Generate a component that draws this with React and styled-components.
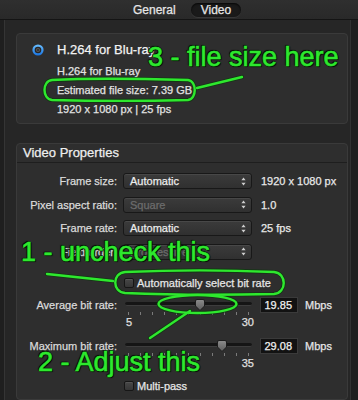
import React from 'react';
import styled, { createGlobalStyle } from 'styled-components';

const GlobalStyle = createGlobalStyle`
  html, body { margin: 0; padding: 0; background: #1f1f1f; }
  body { font-family: "Liberation Sans", Arial, Helvetica, sans-serif; }
  * { box-sizing: border-box; }
`;

const Screen = styled.div`
  position: relative;
  width: 358px;
  height: 400px;
  overflow: hidden;
  background: #1f1f1f;
  display: flex;
  flex-direction: column;
  -webkit-text-stroke: 0.25px currentColor;
`;

const TopBar = styled.div`
  flex: none;
  height: 20px;
  background: linear-gradient(#2f2f2f, #292929);
  border-bottom: 1px solid #141414;
  display: flex;
  align-items: center;
  padding-left: 123px;
  gap: 5px;
`;

const Tab = styled.div`
  height: 14px;
  padding: 0 10px;
  border-radius: 7px;
  font-size: 12px;
  line-height: 14px;
  color: #e6e6e6;
  background: ${p => (p.$active ? '#1a1a1a' : 'transparent')};
  box-shadow: ${p =>
    p.$active ? 'inset 0 1px 2px rgba(0,0,0,0.8), 0 1px 0 rgba(255,255,255,0.07)' : 'none'};
`;

const Body = styled.div`
  flex: 1;
  display: flex;
`;

const Gutter = styled.div`
  width: 4px;
  flex: none;
  background: #1f1f1f;
`;

const Panel = styled.div`
  width: 347px;
  flex: none;
  background: #262626;
  border-left: 1px solid #353535;
  border-right: 1px solid #323232;
  padding: 13px 2px 0 11px;
  display: flex;
  flex-direction: column;
  gap: 19px;
`;

const Card = styled.section`
  background: #2e2e2e;
  border: 1px solid #3a3a3a;
  border-radius: 4px;
`;

const Summary = styled(Card)`
  height: 91px;
  display: grid;
  grid-template-columns: 12px 1fr;
  column-gap: 13px;
  padding: 8px 0 4px 15px;
`;

const RadioIcon = styled.svg`
  width: 12px;
  height: 12px;
  margin-top: 2px;
`;

const SummaryText = styled.div`
  display: flex;
  flex-direction: column;
`;

const Title = styled.div`
  font-size: 13px;
  line-height: 16px;
  color: #f2f2f2;
  margin-bottom: 4px;
`;

const InfoLine = styled.div`
  font-size: 11px;
  line-height: 19px;
  color: #e2e2e2;
`;

const Properties = styled(Card)`
  flex: 1;
  padding-bottom: 2px;
`;

const CardHeader = styled.div`
  height: 19px;
  line-height: 18px;
  font-size: 13px;
  color: #efefef;
  padding-left: 6px;
  border-bottom: 1px solid #1e1e1e;
`;

const Form = styled.div`
  padding-top: 10px;
  display: flex;
  flex-direction: column;
`;

const FieldRow = styled.div`
  display: grid;
  grid-template-columns: 100px 129px 1fr;
  column-gap: 6px;
  align-items: center;
  margin-top: ${p => p.$mt || 0}px;
`;

const Label = styled.div`
  text-align: right;
  font-size: 11px;
  line-height: 16px;
  color: #dadada;
  white-space: nowrap;
  align-self: ${p => (p.$top ? 'start' : 'center')};
`;

const Popup = styled.div`
  height: 16px;
  border: 1px solid #181818;
  border-radius: 3px;
  background: linear-gradient(#3b3b3b, #303030);
  box-shadow: inset 0 1px 0 rgba(255, 255, 255, 0.07);
  display: flex;
  align-items: center;
  justify-content: space-between;
  padding: 0 5px 0 6px;
  font-size: 11px;
  color: ${p => (p.$disabled ? '#6c6c6c' : '#ececec')};
`;

const Arrows = styled.svg`
  width: 5px;
  height: 9px;
`;

const Value = styled.div`
  font-size: 11px;
  color: #e8e8e8;
  margin-left: 3px;
  white-space: nowrap;
`;

const CheckRow = styled.label`
  display: flex;
  align-items: center;
  gap: 3px;
  padding-left: 107px;
  height: 16px;
  margin-top: ${p => p.$mt || 0}px;
  font-size: 11px;
  color: #e6e6e6;
`;

const Box = styled.span`
  width: 10px;
  height: 10px;
  border: 1px solid #161616;
  border-radius: 2px;
  background: linear-gradient(#474747, #363636);
  box-shadow: inset 0 1px 0 rgba(255, 255, 255, 0.08);
`;

const SliderBox = styled.div`
  display: flex;
  flex-direction: column;
`;

const TrackArea = styled.div`
  position: relative;
  height: 16px;
`;

const Track = styled.div`
  margin: 5px 0 0 2px;
  height: 4px;
  border-radius: 2px;
  background: #151515;
  border-bottom: 1px solid #3d3d3d;
`;

const Thumb = styled.svg`
  position: absolute;
  top: 2px;
  width: 10px;
  height: 12px;
`;

const Ticks = styled.div`
  display: flex;
  justify-content: space-between;
  padding: 0 3px 0 5px;
  margin-top: -1px;
  height: 4px;
`;

const Tick = styled.span`
  width: 1px;
  height: 3px;
  background: #7a7a7a;
`;

const Scale = styled.div`
  display: flex;
  justify-content: ${p => (p.$endOnly ? 'flex-end' : 'space-between')};
  padding-left: 3px;
  margin-right: -2px;
  font-size: 11px;
  line-height: 12px;
  color: #e0e0e0;
`;

const Entry = styled.div`
  align-self: start;
  margin-left: 2px;
  display: flex;
  align-items: center;
  gap: 7px;
`;

const NumberField = styled.div`
  width: 38px;
  height: 16px;
  background: #121212;
  border: 1px solid #3a3a3a;
  font-size: 11px;
  line-height: 14px;
  text-align: right;
  padding-right: 5px;
  color: #f0f0f0;
`;

const Unit = styled.span`
  font-size: 11px;
  color: #e6e6e6;
`;

const Overlay = styled.svg`
  position: absolute;
  left: 0;
  top: 0;
  width: 358px;
  height: 400px;
  pointer-events: none;
`;

const Callout = styled.div`
  position: absolute;
  left: ${p => p.$x}px;
  top: ${p => p.$y}px;
  font-family: "Liberation Sans", Arial, sans-serif;
  font-size: 27px;
  line-height: 27px;
  color: #2ee82e;
  -webkit-text-stroke: 0.6px #2ee82e;
  white-space: nowrap;
  text-shadow: 1px 0 0 #041a04, -1px 0 0 #041a04, 0 1px 0 #041a04, 0 -1px 0 #041a04,
    1px 1px 1px #000, -1px -1px 1px #000;
  pointer-events: none;
`;

const ArrowsIcon = () => (
  <Arrows viewBox="0 0 5 9">
    <path d="M2.5 0.5 L4.6 3.3 H0.4 Z M2.5 8.5 L4.6 5.7 H0.4 Z" fill="#cfcfcf" />
  </Arrows>
);

const SelectRow = ({ label, value, info, disabled, mt }) => (
  <FieldRow $mt={mt}>
    <Label>{label}</Label>
    <Popup $disabled={disabled}>
      <span>{value}</span>
      <ArrowsIcon />
    </Popup>
    <Value>{info}</Value>
  </FieldRow>
);

const Slider = ({ label, value, min, max, scale, endOnly, mt }) => {
  const frac = (parseFloat(value) - min) / (max - min);
  return (
    <FieldRow $mt={mt}>
      <Label $top>{label}</Label>
      <SliderBox>
        <TrackArea>
          <Track />
          <Thumb viewBox="0 0 10 12" style={{ left: `${frac * 121}px` }}>
            <defs>
              <linearGradient id="thumbg" x1="0" y1="0" x2="0" y2="1">
                <stop offset="0" stopColor="#8c8c8c" />
                <stop offset="1" stopColor="#5c5c5c" />
              </linearGradient>
            </defs>
            <path
              d="M0.5 2 Q0.5 0.5 2 0.5 H8 Q9.5 0.5 9.5 2 V7 L5 11.5 L0.5 7 Z"
              fill="url(#thumbg)"
              stroke="#1c1c1c"
              strokeWidth="1"
            />
          </Thumb>
        </TrackArea>
        <Ticks>
          {Array.from({ length: 11 }).map((_, i) => (
            <Tick key={i} />
          ))}
        </Ticks>
        <Scale $endOnly={endOnly}>
          {scale.map(s => (
            <span key={s}>{s}</span>
          ))}
        </Scale>
      </SliderBox>
      <Entry>
        <NumberField>{value}</NumberField>
        <Unit>Mbps</Unit>
      </Entry>
    </FieldRow>
  );
};

export default function App() {
  return (
    <Screen>
      <GlobalStyle />
      <TopBar>
        <Tab>General</Tab>
        <Tab $active>Video</Tab>
      </TopBar>
      <Body>
        <Gutter />
        <Panel>
          <Summary>
            <RadioIcon viewBox="0 0 12 12">
              <defs>
                <linearGradient id="radiog" x1="0" y1="0" x2="0" y2="1">
                  <stop offset="0" stopColor="#6cc0ff" />
                  <stop offset="1" stopColor="#1772e0" />
                </linearGradient>
              </defs>
              <circle cx="6" cy="6" r="5.6" fill="url(#radiog)" />
              <circle cx="6" cy="6" r="3.3" fill="#262626" />
              <circle cx="6" cy="6" r="2" fill="#5a5a5a" />
              <circle cx="6" cy="6" r="1" fill="#2a2a2a" />
            </RadioIcon>
            <SummaryText>
              <Title>H.264 for Blu-ray</Title>
              <InfoLine>H.264 for Blu-ray</InfoLine>
              <InfoLine>Estimated file size: 7.39 GB</InfoLine>
              <InfoLine>1920 x 1080 px | 25 fps</InfoLine>
            </SummaryText>
          </Summary>
          <Properties>
            <CardHeader>Video Properties</CardHeader>
            <Form>
              <SelectRow label="Frame size:" value="Automatic" info="1920 x 1080 px" />
              <SelectRow label="Pixel aspect ratio:" value="Square" info="1.0" disabled mt={7.5} />
              <SelectRow label="Frame rate:" value="Automatic" info="25 fps" mt={7.5} />
              <SelectRow label="Field order:" value="Progressive" info="" disabled mt={7.5} />
              <CheckRow $mt={15.5}>
                <Box />
                Automatically select bit rate
              </CheckRow>
              <Slider
                label="Average bit rate:"
                value="19.85"
                min={5}
                max={30}
                scale={['5', '30']}
                mt={6}
              />
              <Slider
                label="Maximum bit rate:"
                value="29.08"
                min={8}
                max={35}
                scale={['35']}
                endOnly
                mt={10}
              />
              <CheckRow $mt={9}>
                <Box />
                Multi-pass
              </CheckRow>
            </Form>
          </Properties>
        </Panel>
      </Body>

      <Overlay viewBox="0 0 358 400">
        <g fill="none" strokeLinecap="round" strokeLinejoin="round">
          <g stroke="#0b3a0b" strokeWidth="4.2" opacity="0.7">
            <path d="M52 80 C90 78 150 79 188 80 C197 81 197 99 188 100 C150 101 90 101 52 100 C42 99 42 81 52 80 Z" />
            <path d="M197 88 L242 77" />
            <path d="M125 272 C170 270 230 270 274 272 C287 273 287 293 274 294 C230 295 170 295 125 293 C112 292 112 273 125 272 Z" />
            <path d="M47 274 L113 281" />
            <ellipse cx="197.5" cy="304" rx="39" ry="9" />
            <path d="M150 338 L190 311" />
          </g>
          <g stroke="#2ee82e" strokeWidth="2.4">
            <path d="M52 80 C90 78 150 79 188 80 C197 81 197 99 188 100 C150 101 90 101 52 100 C42 99 42 81 52 80 Z" />
            <path d="M197 88 L242 77" />
            <path d="M125 272 C170 270 230 270 274 272 C287 273 287 293 274 294 C230 295 170 295 125 293 C112 292 112 273 125 272 Z" />
            <path d="M47 274 L113 281" />
            <ellipse cx="197.5" cy="304" rx="39" ry="9" />
            <path d="M150 338 L190 311" />
          </g>
        </g>
      </Overlay>
      <Callout $x={148} $y={44}>3 - file size here</Callout>
      <Callout $x={21} $y={239}>1 - uncheck this</Callout>
      <Callout $x={38} $y={349}>2 - Adjust this</Callout>
    </Screen>
  );
}
